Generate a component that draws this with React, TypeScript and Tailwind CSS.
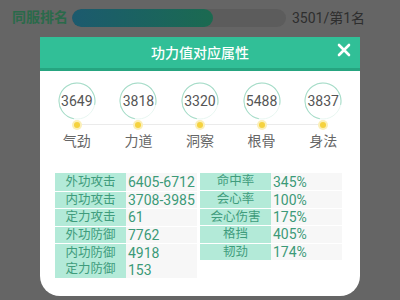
import React from "react";

const stats = [
  { v: "3649", l: "气劲" },
  { v: "3818", l: "力道" },
  { v: "3320", l: "洞察" },
  { v: "5488", l: "根骨" },
  { v: "3837", l: "身法" },
];

const left = [
  ["外功攻击", "6405-6712"],
  ["内功攻击", "3708-3985"],
  ["定力攻击", "61"],
  ["外功防御", "7762"],
];

const right = [
  ["命中率", "345%"],
  ["会心率", "100%"],
  ["会心伤害", "175%"],
  ["格挡", "405%"],
  ["韧劲", "174%"],
];

function Ring({ value }: { value: string }) {
  return (
    <div className="relative w-[38px] h-[38px] flex items-center justify-center">
      <svg className="absolute inset-0" width="38" height="38" viewBox="0 0 38 38">
        <circle cx="19" cy="19" r="18" fill="none" stroke="#e8f6f1" strokeWidth="1" />
        <circle
          cx="19"
          cy="19"
          r="18"
          fill="none"
          stroke="#a6dcc8"
          strokeWidth="1"
          strokeDasharray="85 200"
          transform="rotate(100 19 19)"
        />
      </svg>
      <span className="relative text-[14px] text-[#555] leading-none">{value}</span>
    </div>
  );
}

export default function App() {
  return (
    <div
      className="w-[400px] h-[300px] bg-[#656565] overflow-hidden"
      style={{ fontFamily: "Roboto, 'Noto Sans CJK SC', sans-serif" }}
    >
      <div className="h-[37px] flex items-start pt-[8px] pl-[12px]">
        <span className="text-[14px] font-bold text-[#2a6a4a] leading-[19px]">同服排名</span>
        <div className="ml-[4px] mt-[1px] w-[214px] h-[18px] rounded-full bg-[#5c5c5c] overflow-hidden">
          <div className="w-[141px] h-full rounded-full bg-gradient-to-r from-[#1c5a6e] to-[#1b6a50]" />
        </div>
        <span className="ml-[6px] text-[14px] text-[#2e2e2e] leading-[19px] mt-[1px]">3501/第1名</span>
      </div>

      <div className="mx-[40px] h-[259px] bg-white rounded-b-[20px] overflow-hidden">
        <div className="relative h-[34px] bg-[#31bf97] border-b-[3px] border-[#26a580] flex items-center justify-center">
          <span className="text-white text-[14px] font-medium leading-none">功力值对应属性</span>
          <svg className="absolute right-[9px] top-[6px]" width="14" height="14" viewBox="0 0 14 14">
            <path d="M2 2 L12 12 M12 2 L2 12" stroke="white" strokeWidth="2.6" strokeLinecap="round" />
          </svg>
        </div>

        <div className="relative mx-[6px] mt-[11px] flex">
          <div className="absolute left-[31px] right-[31px] top-[42px] h-[1px] bg-[#ebebeb]" />
          {stats.map((s) => (
            <div key={s.l} className="relative flex-1 flex flex-col items-center">
              <Ring value={s.v} />
              <div className="mt-[0px] w-[10px] h-[10px] rounded-full bg-[#fbefb8] flex items-center justify-center">
                <div className="w-[6px] h-[6px] rounded-full bg-[#f5d23f]" />
              </div>
              <span className="mt-[2px] text-[14px] text-[#666] leading-[18px]">{s.l}</span>
            </div>
          ))}
        </div>

        <div className="mt-[23px] ml-[15px] flex gap-[3px] leading-none">
          <div className="w-[142px] flex flex-col">
            {left.map(([k, v], i) => (
              <div key={k} className={`flex h-[17.5px] ${i > 0 ? "border-t border-white" : ""}`}>
                <div className="w-[71px] bg-[#b3ead8] text-[#3f9c7c] text-[12.5px] flex items-center justify-center">{k}</div>
                <div className="flex-1 bg-[#f7f7f7] text-[#3c9a78] text-[14px] flex items-center pl-[2px]">{v}</div>
              </div>
            ))}
            <div className="flex h-[35px] border-t border-white">
              <div className="w-[71px] bg-[#b3ead8] text-[#3f9c7c] text-[12.5px] flex flex-col items-center justify-center gap-[4px]">
                <span>内功防御</span>
                <span>定力防御</span>
              </div>
              <div className="flex-1 bg-[#f7f7f7] text-[#3c9a78] text-[14px] flex flex-col justify-center gap-[3px] pl-[2px]">
                <span>4918</span>
                <span>153</span>
              </div>
            </div>
          </div>
          <div className="w-[142px] flex flex-col">
            {right.map(([k, v], i) => (
              <div key={k} className={`flex h-[17.4px] ${i > 0 ? "border-t border-white" : ""}`}>
                <div className="w-[71px] bg-[#b3ead8] text-[#3f9c7c] text-[12.5px] flex items-center justify-center">{k}</div>
                <div className="flex-1 bg-[#f7f7f7] text-[#3c9a78] text-[14px] flex items-center pl-[2px]">{v}</div>
              </div>
            ))}
          </div>
        </div>
      </div>
    </div>
  );
}
